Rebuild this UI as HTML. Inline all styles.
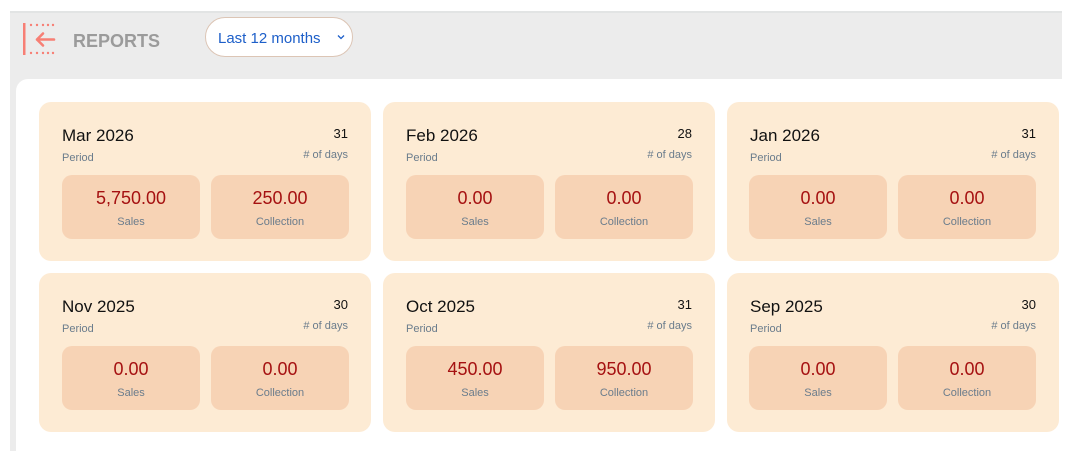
<!DOCTYPE html>
<html><head><style>
*{margin:0;padding:0;box-sizing:border-box}
body{width:1071px;height:438px;background:#fff;position:relative;overflow:hidden;font-family:"Liberation Sans",Arial,sans-serif}
.hdr{position:absolute;left:10px;top:11px;width:1052px;height:440px;background:#ececec;border-top:2px solid #e2e4e4}
.panel{position:absolute;left:16px;top:79px;width:1070px;height:380px;background:#fff;border-radius:12px 0 0 0}
.title{position:absolute;left:73px;top:31px;font-size:18px;font-weight:bold;color:#9b9b9b}
.dd{position:absolute;left:205px;top:17px;width:148px;height:40px;border:1px solid #dcc5b5;border-radius:20px;background:#fff;color:#1d5fc9;font-size:15px;padding:12px 0 0 12px}
.dd svg{position:absolute;right:7px;top:16px}
.card{position:absolute;width:332px;height:159px;background:#fdebd4;border-radius:12px}
.card .m{position:absolute;left:23px;top:24px;font-size:17px;color:#111}
.card .p{position:absolute;left:23px;top:50px;font-size:11px;color:#6a7c8c}
.card .d{position:absolute;right:23px;top:24px;font-size:13px;color:#111}
.card .dl{position:absolute;right:23px;top:47px;font-size:11px;color:#6a7c8c}
.b{position:absolute;top:73px;width:138px;height:64px;background:#f7d3b5;border-radius:10px;text-align:center}
.b .v{margin-top:13px;font-size:18px;color:#a51111}
.b .l{margin-top:7px;font-size:11px;color:#6a7c8c}
</style></head><body>
<div class="hdr"></div>
<svg style="position:absolute;left:20px;top:20px" width="40" height="40" viewBox="20 20 40 40">
<rect x="23" y="23" width="2.5" height="32" fill="#f77f75"/>
<g fill="#f77f75"><circle cx="31" cy="25" r="1.2"/><circle cx="37" cy="25" r="1.2"/><circle cx="43" cy="25" r="1.2"/><circle cx="48" cy="25" r="1.2"/><circle cx="53" cy="25" r="1.2"/>
<circle cx="31" cy="53" r="1.2"/><circle cx="37" cy="53" r="1.2"/><circle cx="43" cy="53" r="1.2"/><circle cx="48" cy="53" r="1.2"/><circle cx="53" cy="53" r="1.2"/></g>
<path d="M54 39.5H37M43 33.5L37 39.5L43 45.5" stroke="#f77f75" stroke-width="2.6" fill="none" stroke-linecap="round" stroke-linejoin="round"/>
</svg>
<div class="title">REPORTS</div>
<div class="dd">Last 12 months<svg width="8" height="6" viewBox="0 0 8 6"><path d="M1 1.5L4 4.5L7 1.5" stroke="#1d5fc9" stroke-width="1.3" fill="none"/></svg></div>
<div class="panel"></div>

<div class="card" style="left:39px;top:102px"><div class="m">Mar 2026</div><div class="p">Period</div><div class="d">31</div><div class="dl"># of days</div><div class="b" style="left:23px"><div class="v">5,750.00</div><div class="l">Sales</div></div><div class="b" style="left:172px"><div class="v">250.00</div><div class="l">Collection</div></div></div>
<div class="card" style="left:383px;top:102px"><div class="m">Feb 2026</div><div class="p">Period</div><div class="d">28</div><div class="dl"># of days</div><div class="b" style="left:23px"><div class="v">0.00</div><div class="l">Sales</div></div><div class="b" style="left:172px"><div class="v">0.00</div><div class="l">Collection</div></div></div>
<div class="card" style="left:727px;top:102px"><div class="m">Jan 2026</div><div class="p">Period</div><div class="d">31</div><div class="dl"># of days</div><div class="b" style="left:22px"><div class="v">0.00</div><div class="l">Sales</div></div><div class="b" style="left:171px"><div class="v">0.00</div><div class="l">Collection</div></div></div>
<div class="card" style="left:39px;top:273px"><div class="m">Nov 2025</div><div class="p">Period</div><div class="d">30</div><div class="dl"># of days</div><div class="b" style="left:23px"><div class="v">0.00</div><div class="l">Sales</div></div><div class="b" style="left:172px"><div class="v">0.00</div><div class="l">Collection</div></div></div>
<div class="card" style="left:383px;top:273px"><div class="m">Oct 2025</div><div class="p">Period</div><div class="d">31</div><div class="dl"># of days</div><div class="b" style="left:23px"><div class="v">450.00</div><div class="l">Sales</div></div><div class="b" style="left:172px"><div class="v">950.00</div><div class="l">Collection</div></div></div>
<div class="card" style="left:727px;top:273px"><div class="m">Sep 2025</div><div class="p">Period</div><div class="d">30</div><div class="dl"># of days</div><div class="b" style="left:22px"><div class="v">0.00</div><div class="l">Sales</div></div><div class="b" style="left:171px"><div class="v">0.00</div><div class="l">Collection</div></div></div>
</body></html>
